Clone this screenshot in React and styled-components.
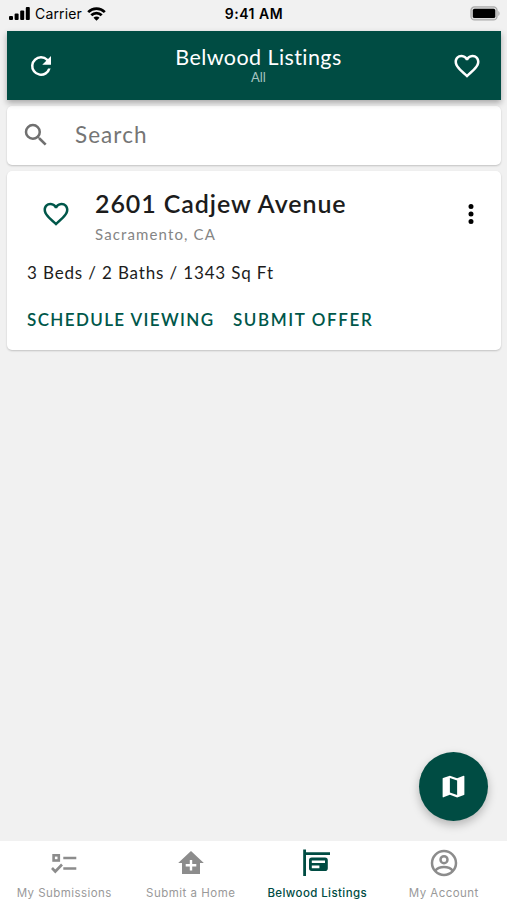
import styled, { createGlobalStyle } from 'styled-components';

const GlobalStyle = createGlobalStyle`
  body {
    margin: 0;
    background: #f1f1f1;
  }

  * {
    box-sizing: border-box;
  }
`;

const Screen = styled.div`
  position: relative;
  display: flex;
  flex-direction: column;
  width: 507px;
  height: 900px;
  overflow: hidden;
  background: #f1f1f1;
  font-family: Lato, 'Liberation Sans', sans-serif;
  color: #1c1c1c;
`;

const Text = styled.span`
  display: block;
  white-space: nowrap;
`;

const StatusBar = styled.div`
  display: grid;
  grid-template-columns: 1fr auto 1fr;
  align-items: center;
  height: 31px;
  padding: 0 7px 4px 8px;
  font-family: Inter, sans-serif;
  color: #000;
`;

const Signal = styled.div`
  display: flex;
  align-items: center;
`;

const Carrier = styled(Text)`
  margin: 0 5px 0 5px;
  font-size: 14px;
  line-height: 20px;
  letter-spacing: 0.15px;
`;

const Clock = styled(Text)`
  font-size: 14px;
  font-weight: 600;
  line-height: 20px;
  letter-spacing: 0.5px;
`;

const BatteryIcon = styled.svg`
  justify-self: end;
`;

const Header = styled.header`
  position: relative;
  display: flex;
  align-items: center;
  justify-content: space-between;
  height: 69px;
  margin: 0 6px 0 7px;
  padding: 0 19px 0 19px;
  background: #004c43;
  box-shadow: 0 3px 6px rgba(0, 0, 0, 0.3);
  color: #fff;
`;

const HeaderTitle = styled.div`
  padding: 0 0 2px 9px;
  text-align: center;
`;

const Title = styled(Text)`
  font-size: 21.5px;
  line-height: 25px;
  letter-spacing: 0.42px;
`;

const Subtitle = styled(Text)`
  font-size: 13px;
  line-height: 15px;
  color: #a5c4c0;
`;

const Card = styled.section`
  margin: 6px 6px 0 7px;
  border-radius: 5px;
  background: #fff;
  box-shadow: 0 1px 2px rgba(0, 0, 0, 0.2);
`;

const SearchBox = styled(Card)`
  display: flex;
  align-items: center;
  height: 59px;
  padding: 0 0 1px 14px;
`;

const Placeholder = styled(Text)`
  margin-left: 24px;
  padding-bottom: 1px;
  font-size: 22.5px;
  line-height: 28px;
  letter-spacing: 1.05px;
  color: #757575;
`;

const Listing = styled(Card)`
  height: 179px;
  padding: 15px 15px 0 20px;
`;

const ListingTop = styled.div`
  display: flex;
  align-items: flex-start;
  height: 75px;
`;

const IconSlot = styled.div`
  display: flex;
  padding: 13px 0 0 ${(props) => props.$left || 0}px;
`;

const ListingName = styled.div`
  flex: 1;
  padding-left: 24px;
`;

const Address = styled(Text)`
  font-size: 25px;
  font-weight: 600;
  line-height: 34px;
  letter-spacing: 0.92px;
`;

const City = styled(Text)`
  margin-top: 4px;
  font-size: 15px;
  line-height: 20px;
  letter-spacing: 1.13px;
  color: #858585;
`;

const Details = styled(Text)`
  font-size: 17px;
  line-height: 24px;
  letter-spacing: 0.85px;
`;

const Actions = styled.div`
  display: flex;
  gap: 18.5px;
  margin-top: 23px;
`;

const Action = styled.button`
  padding: 0;
  border: 0;
  background: none;
  color: #00574a;
  font: 600 17px/24px Lato, sans-serif;
  letter-spacing: ${(props) => props.$spacing}px;
  white-space: nowrap;
`;

const MapButton = styled.button`
  position: absolute;
  right: 19px;
  bottom: 79px;
  display: grid;
  place-items: center;
  width: 69px;
  height: 69px;
  padding: 0;
  border: 0;
  border-radius: 50%;
  background: #004c43;
  box-shadow: 0 4px 10px rgba(0, 0, 0, 0.25);
  color: #fff;
`;

const TabBar = styled.nav`
  display: grid;
  grid-template-columns: repeat(4, 1fr);
  height: 59px;
  margin-top: auto;
  padding-left: 1px;
  background: #fff;
`;

const Tab = styled.div`
  display: flex;
  flex-direction: column;
  align-items: center;
  padding-top: 6px;
  color: ${(props) => (props.$active ? '#004c43' : '#8c8c8c')};
`;

const TabLabel = styled(Text)`
  margin-top: 6px;
  font-family: Inter, sans-serif;
  font-size: 11.5px;
  font-weight: ${(props) => (props.$active ? 500 : 400)};
  line-height: 16px;
  letter-spacing: ${(props) => props.$spacing}px;
  color: ${(props) => (props.$active ? '#004c43' : '#999')};
`;

const heartPath =
  'M12.1 18.55L12 18.65L11.89 18.55C7.14 14.24 4 11.39 4 8.5C4 6.5 5.5 5 7.5 5C9.04 5 10.54 6 11.07 7.36H12.93C13.46 6 14.96 5 16.5 5C18.5 5 20 6.5 20 8.5C20 11.39 16.86 14.24 12.1 18.55M16.5 3C14.76 3 13.09 3.81 12 5.08C10.91 3.81 9.24 3 7.5 3C4.42 3 2 5.41 2 8.5C2 12.27 5.4 15.36 10.55 20.03L12 21.35L13.45 20.03C18.6 15.36 22 12.27 22 8.5C22 5.41 19.58 3 16.5 3Z';
const refreshPath =
  'M17.65 6.35A7.95 7.95 0 0 0 12 4a8 8 0 1 0 7.73 10h-2.08A6 6 0 1 1 12 6c1.66 0 3.14.69 4.22 1.78L13 11h7V4z';
const searchPath =
  'M15.5 14h-.79l-.28-.27A6.47 6.47 0 0 0 16 9.5 6.5 6.5 0 1 0 9.5 16c1.61 0 3.09-.59 4.23-1.57l.27.28v.79l5 4.99L20.49 19zm-6 0a4.5 4.5 0 1 1 0-9 4.5 4.5 0 0 1 0 9z';
const dotsPath =
  'M12 8a2 2 0 1 0 0-4 2 2 0 0 0 0 4zm0 2a2 2 0 1 0 0 4 2 2 0 0 0 0-4zm0 6a2 2 0 1 0 0 4 2 2 0 0 0 0-4z';
const mapPath =
  'M15 19L9 16.89V5L15 7.11M20.5 3L20.34 3L15 5.1L9 3L3.36 4.9C3.15 4.97 3 5.15 3 5.38V20.5A.5.5 0 0 0 3.5 21L3.66 20.97L9 18.9L15 21L20.64 19.1C20.85 19 21 18.85 21 18.62V3.5A.5.5 0 0 0 20.5 3Z';

const Icon = ({ path, size = 30, color = 'currentColor' }) => (
  <svg width={size} height={size} viewBox="0 0 24 24" fill={color}>
    <path d={path} />
  </svg>
);

const ChecklistIcon = () => (
  <svg width="32" height="32" viewBox="0 0 32 32" fill="none" stroke="currentColor" strokeWidth="2.6">
    <rect x="5.6" y="8.3" width="5.2" height="5.2" />
    <path d="M15.3 11h13M15.3 21.5h13" />
    <path d="M4 21l3.3 3.5 6.7-7" />
  </svg>
);

const HomeIcon = () => (
  <svg width="32" height="32" viewBox="0 0 32 32" fill="currentColor">
    <path d="M16 4L3.2 16H7v11h18V16h3.8z" />
    <path d="M16 13v10.6M10.7 18.3h10.6" stroke="#fff" strokeWidth="2.4" />
  </svg>
);

const SignIcon = () => (
  <svg width="32" height="32" viewBox="0 0 32 32" fill="currentColor">
    <path d="M2.2 2.6h2.8v2.6h24v2.9h-24v21H2.2z" />
    <path
      fillRule="evenodd"
      d="M10.8 10.5h13.2a2.8 2.8 0 0 1 2.8 2.8v7.9a2.8 2.8 0 0 1-2.8 2.8H10.8a2.8 2.8 0 0 1-2.8-2.8v-7.9a2.8 2.8 0 0 1 2.8-2.8zM10.8 13.5v2.4h13.2v-2.4zM10.8 18.6v2.6h7.6v-2.6z"
    />
  </svg>
);

const AccountIcon = () => (
  <svg width="32" height="32" viewBox="0 0 32 32" fill="none" stroke="currentColor" strokeWidth="2.5">
    <circle cx="16" cy="16" r="12" />
    <circle cx="16" cy="12.7" r="3.5" />
    <path d="M7.4 23.5c1.8-2.4 5.2-3.6 8.6-3.6s6.8 1.2 8.6 3.6" />
  </svg>
);

const tabs = [
  { label: 'My Submissions', icon: ChecklistIcon, spacing: 0.45 },
  { label: 'Submit a Home', icon: HomeIcon, spacing: 0.5 },
  { label: 'Belwood Listings', icon: SignIcon, spacing: 0.4, active: true },
  { label: 'My Account', icon: AccountIcon, spacing: 0.45 },
];

const App = () => {
  return (
    <Screen>
      <GlobalStyle />
      <StatusBar>
        <Signal>
          <svg width="22" height="14" viewBox="0 0 22 14">
            <rect x="1" y="9" width="4" height="4" rx="1" />
            <rect x="6.6" y="6.5" width="4" height="6.5" rx="1" />
            <rect x="12.2" y="3.5" width="4" height="9.5" rx="1" />
            <rect x="17.8" y="0" width="4" height="13" rx="1" />
          </svg>
          <Carrier>Carrier</Carrier>
          <svg width="19" height="14" viewBox="0 0 19 14" fill="none" stroke="#000" strokeWidth="2.7">
            <path d="M1.2 5.1C5.8.4 13.2.4 17.8 5.1" />
            <path d="M4.3 8.3c2.9-2.9 7.5-2.9 10.4 0" />
            <path d="M9.5 13.7L6.5 10.7a4.2 4.2 0 0 1 6 0z" fill="#000" stroke="none" />
          </svg>
        </Signal>
        <Clock>9:41 AM</Clock>
        <BatteryIcon width="31" height="15" viewBox="0 0 31 15">
          <rect x="2" y=".9" width="26" height="13" rx="3.5" fill="#ddd" stroke="#aaa" strokeWidth="1.3" />
          <rect x="3.8" y="2.8" width="22.5" height="9.3" rx="1.7" />
          <path d="M29.3 5c1.7.7 1.7 4.3 0 5z" fill="#aaa" />
        </BatteryIcon>
      </StatusBar>

      <Header>
        <Icon path={refreshPath} />
        <HeaderTitle>
          <Title>Belwood Listings</Title>
          <Subtitle>All</Subtitle>
        </HeaderTitle>
        <Icon path={heartPath} />
      </Header>

      <SearchBox>
        <Icon path={searchPath} color="#707070" />
        <Placeholder>Search</Placeholder>
      </SearchBox>

      <Listing>
        <ListingTop>
          <IconSlot $left={14}>
            <Icon path={heartPath} color="#00574a" />
          </IconSlot>
          <ListingName>
            <Address>2601 Cadjew Avenue</Address>
            <City>Sacramento, CA</City>
          </ListingName>
          <IconSlot>
            <Icon path={dotsPath} color="#000" />
          </IconSlot>
        </ListingTop>
        <Details>3 Beds / 2 Baths / 1343 Sq Ft</Details>
        <Actions>
          <Action $spacing={1.37}>SCHEDULE VIEWING</Action>
          <Action $spacing={1.6}>SUBMIT OFFER</Action>
        </Actions>
      </Listing>

      <MapButton>
        <Icon path={mapPath} size={29} />
      </MapButton>

      <TabBar>
        {tabs.map(({ label, icon: TabIcon, spacing, active }) => (
          <Tab key={label} $active={active}>
            <TabIcon />
            <TabLabel $active={active} $spacing={spacing}>
              {label}
            </TabLabel>
          </Tab>
        ))}
      </TabBar>
    </Screen>
  );
};

export default App;
